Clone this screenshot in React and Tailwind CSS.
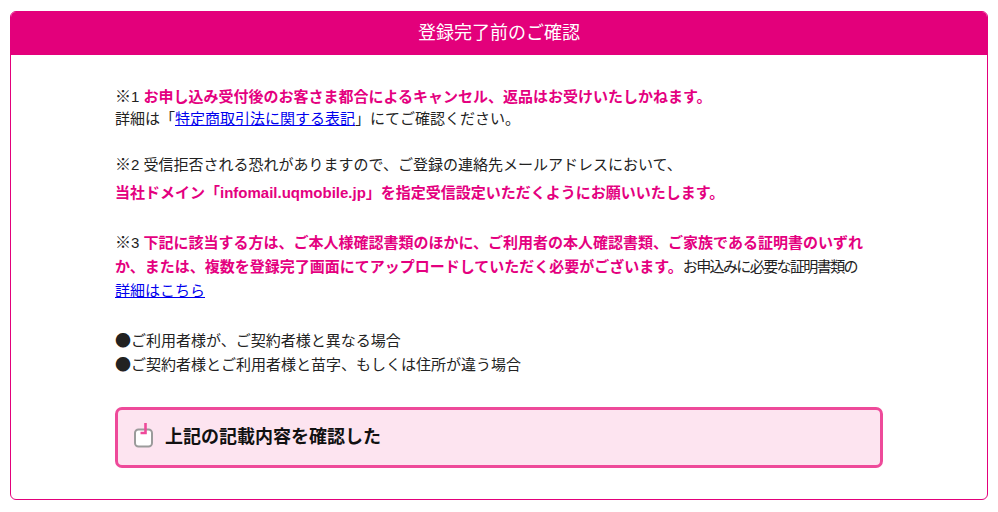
export default function App() {
  const pink = 'text-[#e4007f] font-bold'
  const cjk = "font-['Noto_Sans_CJK_JP',sans-serif] leading-none text-[16px]"
  return (
    <div className="min-h-[512px] bg-white pt-[11px] px-[10px] font-['Liberation_Sans','Noto_Sans_CJK_JP',sans-serif] text-[15px] text-[#222]">
      <div className="rounded-[6px] border border-[#e3007b] overflow-hidden">
        <div className="h-[43px] bg-[#e3007b] flex items-center justify-center text-white text-[18px]">
          登録完了前のご確認
        </div>
        <div className="w-[768px] mx-auto pt-[31px] pb-[31px]">
          <div className="max-w-[760px]">
            <p className="leading-[22px]">
              <span className={cjk}>※</span>1 <span className={pink}>お申し込み受付後のお客さま都合によるキャンセル、返品はお受けいたしかねます。</span>
              <br />
              詳細は「<a href="#" className="text-[#0000ee] underline">特定商取引法に関する表記</a>」にてご確認ください。
            </p>
            <p className="leading-[28px] mt-[21px]">
              <span className={cjk}>※</span>2 受信拒否される恐れがありますので、ご登録の連絡先メールアドレスにおいて、
              <br />
              <span className={pink}>当社ドメイン「infomail.uqmobile.jp」を指定受信設定いただくようにお願いいたします。</span>
            </p>
            <p className="leading-[24px] mt-[24px]">
              <span className={cjk}>※</span>3 <span className={pink}>下記に該当する方は、ご本人様確認書類のほかに、ご利用者の本人確認書類、ご家族である証明書のいずれか、または、複数を登録完了画面にてアップロードしていただく必要がございます。</span>
              <span className="whitespace-nowrap tracking-[-1.6px]">お申込みに必要な証明書類の</span>
              <br />
              <a href="#" className="text-[#0000ee] underline">詳細はこちら</a>
            </p>
            <ul className="leading-[24px] mt-[26px]">
              <li><span className={cjk}>●</span>ご利用者様が、ご契約者様と異なる場合</li>
              <li><span className={cjk}>●</span>ご契約者様とご利用者様と苗字、もしくは住所が違う場合</li>
            </ul>
          </div>
          <label className="mt-[30px] h-[61px] flex items-center gap-[10px] pl-[15px] rounded-[7px] border-[3px] border-[#ee4a9a] bg-[#fde4f0] cursor-pointer">
            <svg width="22" height="30" viewBox="0 0 22 30" className="shrink-0 -mt-[6px]">
              <rect x="2" y="9.5" width="17" height="17" rx="3.5" fill="#fff" stroke="#9b9b9b" strokeWidth="2" />
              <path d="M12.5 3 V13 H7.5" fill="none" stroke="#ee4a9a" strokeWidth="2.6" />
            </svg>
            <span className="text-[18px] font-bold text-[#111]">上記の記載内容を確認した</span>
          </label>
        </div>
      </div>
    </div>
  )
}
